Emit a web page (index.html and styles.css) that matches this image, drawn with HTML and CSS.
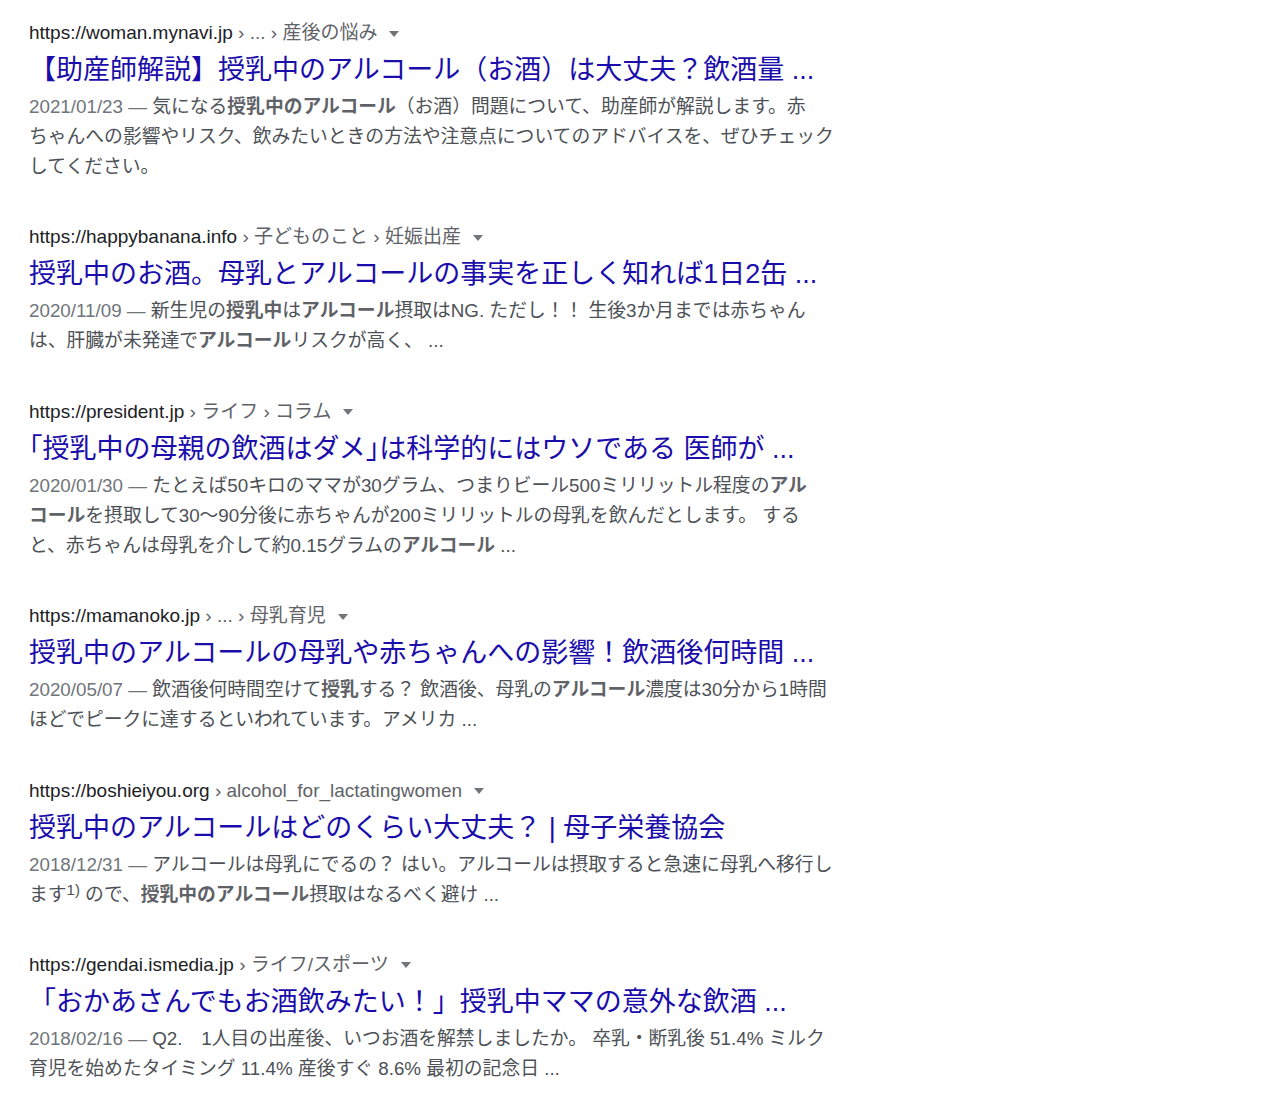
FILE: index.html
```html
<!DOCTYPE html>
<html lang="ja">
<head>
<meta charset="utf-8">
<title>授乳中 アルコール - 検索結果</title>
<link rel="stylesheet" href="styles.css">
</head>
<body>
<main class="results">
  <div class="result">
    <div class="url"><span class="host">https://woman.mynavi.jp</span><span class="crumb"> › ... › 産後の悩み</span><span class="caret"></span></div>
    <a class="title" href="#">【助産師解説】授乳中のアルコール（お酒）は大丈夫？飲酒量 ...</a>
    <div class="snippet"><span class="date">2021/01/23 — </span>気になる<b>授乳中のアルコール</b>（お酒）問題について、助産師が解説します。赤<br>ちゃんへの影響やリスク、飲みたいときの方法や注意点についてのアドバイスを、ぜひチェック<br>してください。</div>
  </div>
  <div class="result">
    <div class="url"><span class="host">https://happybanana.info</span><span class="crumb"> › 子どものこと › 妊娠出産</span><span class="caret"></span></div>
    <a class="title" href="#">授乳中のお酒。母乳とアルコールの事実を正しく知れば1日2缶 ...</a>
    <div class="snippet"><span class="date">2020/11/09 — </span>新生児の<b>授乳中</b>は<b>アルコール</b>摂取はNG. ただし！！ 生後3か月までは赤ちゃん<br>は、肝臓が未発達で<b>アルコール</b>リスクが高く、 ...</div>
  </div>
  <div class="result">
    <div class="url"><span class="host">https://president.jp</span><span class="crumb"> › ライフ › コラム</span><span class="caret"></span></div>
    <a class="title" href="#">｢授乳中の母親の飲酒はダメ｣は科学的にはウソである 医師が ...</a>
    <div class="snippet"><span class="date">2020/01/30 — </span>たとえば50キロのママが30グラム、つまりビール500ミリリットル程度の<b>アル</b><br><b>コール</b>を摂取して30〜90分後に赤ちゃんが200ミリリットルの母乳を飲んだとします。 する<br>と、赤ちゃんは母乳を介して約0.15グラムの<b>アルコール</b> ...</div>
  </div>
  <div class="result">
    <div class="url"><span class="host">https://mamanoko.jp</span><span class="crumb"> › ... › 母乳育児</span><span class="caret"></span></div>
    <a class="title" href="#">授乳中のアルコールの母乳や赤ちゃんへの影響！飲酒後何時間 ...</a>
    <div class="snippet"><span class="date">2020/05/07 — </span>飲酒後何時間空けて<b>授乳</b>する？ 飲酒後、母乳の<b>アルコール</b>濃度は30分から1時間<br>ほどでピークに達するといわれています。アメリカ ...</div>
  </div>
  <div class="result">
    <div class="url"><span class="host">https://boshieiyou.org</span><span class="crumb"> › alcohol_for_lactatingwomen</span><span class="caret"></span></div>
    <a class="title" href="#">授乳中のアルコールはどのくらい大丈夫？ | 母子栄養協会</a>
    <div class="snippet"><span class="date">2018/12/31 — </span>アルコールは母乳にでるの？ はい。アルコールは摂取すると急速に母乳へ移行し<br>ます<sup>1)</sup> ので、<b>授乳中のアルコール</b>摂取はなるべく避け ...</div>
  </div>
  <div class="result">
    <div class="url"><span class="host">https://gendai.ismedia.jp</span><span class="crumb"> › ライフ/スポーツ</span><span class="caret"></span></div>
    <a class="title" href="#">「おかあさんでもお酒飲みたい！」授乳中ママの意外な飲酒 ...</a>
    <div class="snippet"><span class="date">2018/02/16 — </span>Q2.　1人目の出産後、いつお酒を解禁しましたか。 卒乳・断乳後 51.4% ミルク<br>育児を始めたタイミング 11.4% 産後すぐ 8.6% 最初の記念日 ...</div>
  </div>
</main>
</body>
</html>
```

FILE: styles.css
```css
html, body {
  margin: 0;
  padding: 0;
  background: #ffffff;
}

body {
  font-family: "Liberation Sans", "Noto Sans CJK JP", Arial, sans-serif;
}

.results {
  display: flex;
  flex-direction: column;
  gap: 39.4px;
  padding: 17px 0 0 29px;
  width: 900px;
}

.result {
  display: flex;
  flex-direction: column;
  align-items: flex-start;
}

.url {
  display: flex;
  align-items: center;
  height: 32px;
  font-size: 19px;
  line-height: 32px;
  white-space: nowrap;
}

.host {
  color: #202124;
}

.crumb {
  color: #5f6368;
  white-space: pre;
}

.caret {
  width: 0;
  height: 0;
  margin-left: 12px;
  margin-top: 1px;
  border-left: 5px solid transparent;
  border-right: 5px solid transparent;
  border-top: 6px solid #70757a;
}

.title {
  display: block;
  height: 43px;
  font-size: 27px;
  line-height: 43px;
  color: #1a0dab;
  text-decoration: none;
  white-space: nowrap;
}

.snippet {
  font-size: 18.8px;
  line-height: 30px;
  color: #4d5156;
  white-space: nowrap;
}

.snippet .date {
  color: #70757a;
}

.snippet b {
  color: #5f6368;
  font-weight: bold;
}

.snippet sup {
  font-size: 15px;
  line-height: 0;
  vertical-align: 6px;
}
```
